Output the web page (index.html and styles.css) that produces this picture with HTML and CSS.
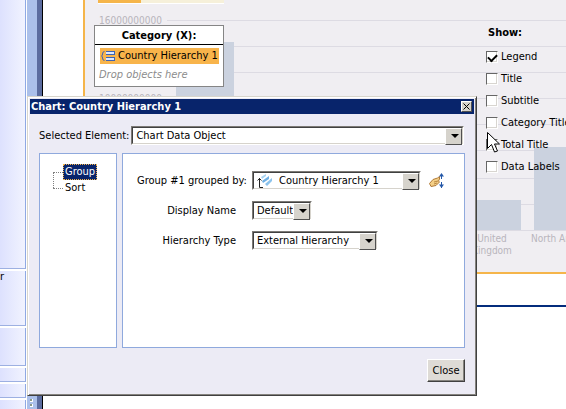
FILE: index.html
```html
<!DOCTYPE html>
<html lang="en">
<head>
    <meta charset="UTF-8">
    <meta name="viewport" content="width=device-width, initial-scale=1.0">
    <title>Chart: Country Hierarchy 1</title>
    <link rel="stylesheet" href="styles.css">
</head>
<body>
    <div class="workspace">
        <!-- Side panel -->
        <aside class="sidebar">
            <div class="side-block side-block-main"></div>
            <div class="side-block side-block-tall">r</div>
            <div class="side-block side-block-medium"></div>
            <div class="side-block side-block-small"></div>
            <div class="side-block side-block-small"></div>
            <div class="side-block side-block-small"></div>
        </aside>
        <div class="splitter">
            <svg class="grip" width="10" height="12" viewBox="0 0 10 12">
                <path d="M3 2h3v3H3zM3 7h3v3H3z" fill="#fff"/>
                <path d="M3 2h2v2H3zM3 7h2v2H3z" fill="#8a9a8c"/>
            </svg>
        </div>

        <main class="main">
            <section class="chart-area">
                <svg class="chart" width="100%" height="272">
                    <g stroke="#dddbe3">
                        <path d="M82 20.5H700M75 46.5H700M75 72.5H700M75 98.5H700M75 124.5H700M75 150.5H700M75 178.5H700M75 204.5H700M75 230.5H700"/>
                    </g>
                    <g fill="#cbd2df">
                        <rect x="91" y="42" width="58" height="188"/>
                        <rect x="378" y="200" width="58" height="30"/>
                        <rect x="449" y="147" width="58" height="83"/>
                    </g>
                    <g class="chart-text">
                        <text x="14" y="24">16000000000</text>
                        <text x="14" y="102">10000000000</text>
                        <text x="407" y="242" text-anchor="middle">United</text>
                        <text x="407" y="254" text-anchor="middle">Kingdom</text>
                        <text x="446" y="242">North America</text>
                    </g>
                </svg>

                <div class="zones">
                    <div class="value-zone"><span></span></div>
                    <div class="drop-zone">
                        <h2>Category (X):</h2>
                        <div class="drop-item">
                            <svg width="14" height="10" viewBox="0 0 14 10">
                                <path d="M3.5 .5Q1.500 .5 1.500 3Q1.500 5 .5 5Q1.500 5 1.500 7Q1.500 9.500 3.500 9.500" fill="none" stroke="#3d63b4"/>
                                <path d="M5 0h9v4H5zM5 6h9v4H5z" fill="#3d63b4"/>
                                <path d="M5 1h8v2H5zM5 7h8v2H5z" fill="#dce8ff"/>
                            </svg>
                            <span>Country Hierarchy 1</span>
                        </div>
                        <p>Drop objects here</p>
                    </div>
                </div>

                <div class="show-options">
                    <h2>Show:</h2>
                    <label><input type="checkbox" checked>Legend</label>
                    <label><input type="checkbox">Title</label>
                    <label><input type="checkbox">Subtitle</label>
                    <label><input type="checkbox">Category Title</label>
                    <label><input type="checkbox">Total Title</label>
                    <label><input type="checkbox">Data Labels</label>
                </div>
            </section>
            <hr class="page-rule">
        </main>
    </div>

    <!-- Chart properties dialog -->
    <div class="dialog" role="dialog" aria-labelledby="dialog-title">
        <div class="title-bar">
            <h1 id="dialog-title">Chart: Country Hierarchy 1</h1>
            <button type="button" class="close-icon" aria-label="Close window">
                <svg width="7" height="7" viewBox="0 0 7 7"><path d="M.5 .5l6 6M6.500 .5l-6 6" stroke="#000"/></svg>
            </button>
        </div>
        <div class="dialog-body">
            <div class="element-row">
                <label for="element">Selected Element:</label>
                <div class="combo combo-fill">
                    <select id="element"><option>Chart Data Object</option></select>
                </div>
            </div>
            <div class="panels">
                <ul class="tree">
                    <li><a href="#group" class="selected">Group</a></li>
                    <li><a href="#sort">Sort</a></li>
                </ul>
                <form class="settings">
                    <label for="group">Group #1 grouped by:</label>
                    <div class="field">
                        <div class="combo combo-large">
                            <select id="group"><option>Country Hierarchy 1</option></select>
                            <svg class="combo-icon" width="16" height="14" viewBox="0 0 16 14">
                                <path d="M2.500 4v9.500H6M.5 6.500l2-2 2 2" fill="none" stroke="#222"/>
                                <path d="M4 3l5-3v2L5 5z" fill="#a9d4f2"/>
                                <path d="M5 7l7-5v3L6 9z" fill="#6fb0e4"/>
                                <path d="M8 10l7-6v3l-5 5z" fill="#8cc3ec"/>
                            </svg>
                        </div>
                        <button type="button" class="sort-button" aria-label="Change order">
                            <svg width="16" height="16" viewBox="0 0 16 16">
                                <path d="M.5 10.500L4 6.500 8.500 5 10.500 3.500 10.500 6 9.500 8 10.500 9 7 12.500 2 13.500z" fill="#f4cf86" stroke="#b07a38"/>
                                <path d="M5 9l4-1M5 11l3-1" stroke="#b98743"/>
                                <path d="M12.500 1v5M12.500 9v6" stroke="#2458a8"/>
                                <path d="M10 3.500l2.500-3.500 2.500 3.500zM10 11.500l2.500 3.500 2.500-3.500z" fill="#2458a8"/>
                            </svg>
                        </button>
                    </div>
                    <label for="display" class="plain">Display Name</label>
                    <div class="combo combo-small">
                        <select id="display"><option>Default</option></select>
                    </div>
                    <label for="type" class="plain">Hierarchy Type</label>
                    <div class="combo combo-medium">
                        <select id="type"><option>External Hierarchy</option></select>
                    </div>
                </form>
            </div>
            <div class="actions">
                <button type="button" class="push-button">Close</button>
            </div>
        </div>
    </div>

    <svg class="pointer" width="13" height="21" viewBox="0 0 13 21">
        <path d="M.5 .5v16l4-4 3 7.500 3-1-3-7h5z" fill="#fff" stroke="#000"/>
    </svg>
</body>
</html>
```

FILE: styles.css
```css
* {
    box-sizing: border-box;
}
body {
    margin: 0;
    height: 100vh;
    overflow: hidden;
    background: #fff;
    color: #000;
    font: 11px/14px Tahoma, "DejaVu Sans Condensed", sans-serif;
}
h1, h2, p, ul {
    margin: 0;
    padding: 0;
    font-size: 11px;
}
select, button {
    font: inherit;
    color: inherit;
}
.workspace {
    display: flex;
    height: 100%;
}

/* Side panel */
.sidebar {
    flex: none;
    width: 27px;
    overflow: hidden;
    background: #fff;
}
.side-block {
    margin-bottom: 2px;
    border-right: 1px solid #8fa9e4;
    border-bottom: 1px solid #9db0e2;
    background: linear-gradient(90deg, #dde1fe, #f1f3ff);
    width: 26px;
}
.side-block-main {
    height: 269px;
}
.side-block-tall {
    height: 55px;
    line-height: 12px;
}
.side-block-medium {
    height: 38px;
}
.side-block-small {
    height: 14px;
}
.splitter {
    flex: none;
    display: flex;
    align-items: flex-end;
    width: 16px;
    background: #abc0ea;
    border-right: 1px solid #000;
    box-shadow: inset -5px 0 #5b6c9f;
}

/* Chart */
.main {
    flex: 1;
    min-width: 0;
}
.chart-area {
    position: relative;
    margin-left: 40px;
    overflow: hidden;
    border-left: 2px solid #f5b54a;
    border-bottom: 2px solid #f5b54a;
    background: #f0eef2;
}
.chart {
    display: block;
}
.chart-text {
    font: 10px "DejaVu Sans Condensed", sans-serif;
    fill: #b8b5bc;
}
.zones {
    position: absolute;
    top: 0;
    left: 9px;
    width: 130px;
}
.value-zone {
    height: 4px;
    margin: 0 0 21px 4px;
    border-bottom: 1px solid #fff;
    background: #f6f0da;
}
.value-zone span {
    display: block;
    width: 43px;
    height: 3px;
    background: #f5b54a;
}
.drop-zone {
    border: 1px solid #858585;
    background: #fff;
}
.drop-zone h2 {
    padding: 3px 0 1px;
    border-bottom: 1px solid #000;
    text-align: center;
}
.drop-item {
    display: flex;
    align-items: center;
    gap: 3px;
    width: 119px;
    height: 16px;
    margin: 3px 0 4px 5px;
    padding-left: 1px;
    background: #f8b44b;
    white-space: nowrap;
}
.drop-item svg {
    flex: none;
}
.drop-zone p {
    padding: 0 0 4px 4px;
    color: #8c8c8c;
    font-style: italic;
}
.show-options {
    position: absolute;
    top: 26px;
    left: 401px;
    display: flex;
    flex-direction: column;
    gap: 8px;
}
.show-options h2 {
    margin-bottom: 2px;
    padding-left: 2px;
}
.show-options label {
    display: flex;
    align-items: center;
    gap: 3px;
    white-space: nowrap;
}
.show-options input {
    appearance: none;
    width: 12px;
    height: 12px;
    margin: 0;
    border: 1px solid;
    border-color: #666 #fff #fff #666;
    background: #fff;
    box-shadow: inset -1px -1px #d8d5d0;
}
.show-options input:checked::before {
    content: "";
    display: block;
    width: 7px;
    height: 4px;
    margin: 2px 0 0 1px;
    border-left: 2px solid #000;
    border-bottom: 2px solid #000;
    transform: rotate(-45deg);
}
.page-rule {
    height: 2px;
    margin: 31px 0 0;
    border: 0;
    background: #042c7c;
}

/* Dialog */
.dialog {
    position: absolute;
    top: 96px;
    left: 27px;
    width: 450px;
    padding: 2px;
    border: 1px solid;
    border-color: #d8d5cc #404040 #404040 #d8d5cc;
    background: #ecebf5;
    box-shadow: inset 1px 1px #fff, inset -1px -1px #85837e;
}
.title-bar {
    display: flex;
    align-items: center;
    justify-content: space-between;
    height: 15px;
    padding: 0 2px 0 1px;
    background: #08246b;
    color: #fff;
}
.close-icon {
    display: flex;
    align-items: center;
    justify-content: center;
    width: 11px;
    height: 11px;
    padding: 0;
    border: 1px solid;
    border-color: #fff #505050 #505050 #fff;
    background: #d6d3cc;
}
.dialog-body {
    padding: 12px 9px 11px;
}
.element-row {
    display: flex;
    align-items: center;
    gap: 2px;
}
.combo {
    position: relative;
    height: 19px;
    border: 1px solid;
    border-color: #7c7a76 #fff #fff #7c7a76;
}
.combo select {
    appearance: none;
    display: block;
    width: 100%;
    height: 17px;
    padding: 0 15px 0 3px;
    border: 1px solid;
    border-color: #404040 #d6d3cc #d6d3cc #404040;
    border-radius: 0;
    background: #fff;
}
.combo::before {
    content: "";
    position: absolute;
    top: 1px;
    right: 1px;
    width: 15px;
    height: 15px;
    border: 1px solid;
    border-color: #fff #505050 #505050 #fff;
    background: #d6d3cc;
    pointer-events: none;
}
.combo::after {
    content: "";
    position: absolute;
    top: 7px;
    right: 4px;
    border: 4px solid transparent;
    border-top-color: #000;
    border-bottom: 0;
    pointer-events: none;
}
.combo-fill {
    flex: 1;
    margin-right: 1px;
}
.combo-large {
    width: 169px;
}
.combo-large select {
    padding-left: 25px;
}
.combo-medium {
    width: 126px;
}
.combo-small {
    width: 60px;
}
.combo-icon {
    position: absolute;
    top: 2px;
    left: 4px;
    pointer-events: none;
}
.panels {
    display: flex;
    gap: 5px;
    height: 195px;
    margin-top: 8px;
}
.tree {
    width: 78px;
    padding: 10px 0 0 13px;
    border: 1px solid #8fa9dd;
    background: #fff;
    list-style: none;
}
.tree li {
    position: relative;
    height: 16px;
    padding-left: 10px;
}
.tree li::before {
    content: "";
    position: absolute;
    top: 8px;
    left: 0;
    width: 10px;
    border-top: 1px dotted #808080;
}
.tree li:first-child::after {
    content: "";
    position: absolute;
    top: 8px;
    left: 0;
    height: 16px;
    border-left: 1px dotted #808080;
}
.tree a {
    display: inline-block;
    padding: 0 1px;
    border: 1px solid transparent;
    color: #000;
    text-decoration: none;
}
.tree .selected {
    border: 1px dotted #f5b54a;
    background: #08246b;
    color: #fff;
}
.settings {
    flex: 1;
    display: grid;
    grid-template-columns: 107px 1fr;
    grid-auto-rows: 19px;
    gap: 11px 8px;
    align-items: center;
    padding: 17px 0 0 14px;
    border: 1px solid #8fa9dd;
    background: #fff;
}
.settings label {
    text-align: right;
    white-space: nowrap;
}
.settings .plain {
    padding-right: 8px;
}
.field {
    display: flex;
    align-items: center;
    gap: 8px;
}
.sort-button {
    display: flex;
    padding: 0;
    border: 0;
    background: none;
}
.actions {
    display: flex;
    justify-content: flex-end;
    margin-top: 11px;
}
.push-button {
    width: 38px;
    height: 23px;
    padding: 0;
    border: 1px solid;
    border-color: #fff #404040 #404040 #fff;
    background: #dedbd6;
    box-shadow: inset -1px -1px #85837e;
}
.pointer {
    position: absolute;
    top: 132px;
    left: 487px;
}
```
